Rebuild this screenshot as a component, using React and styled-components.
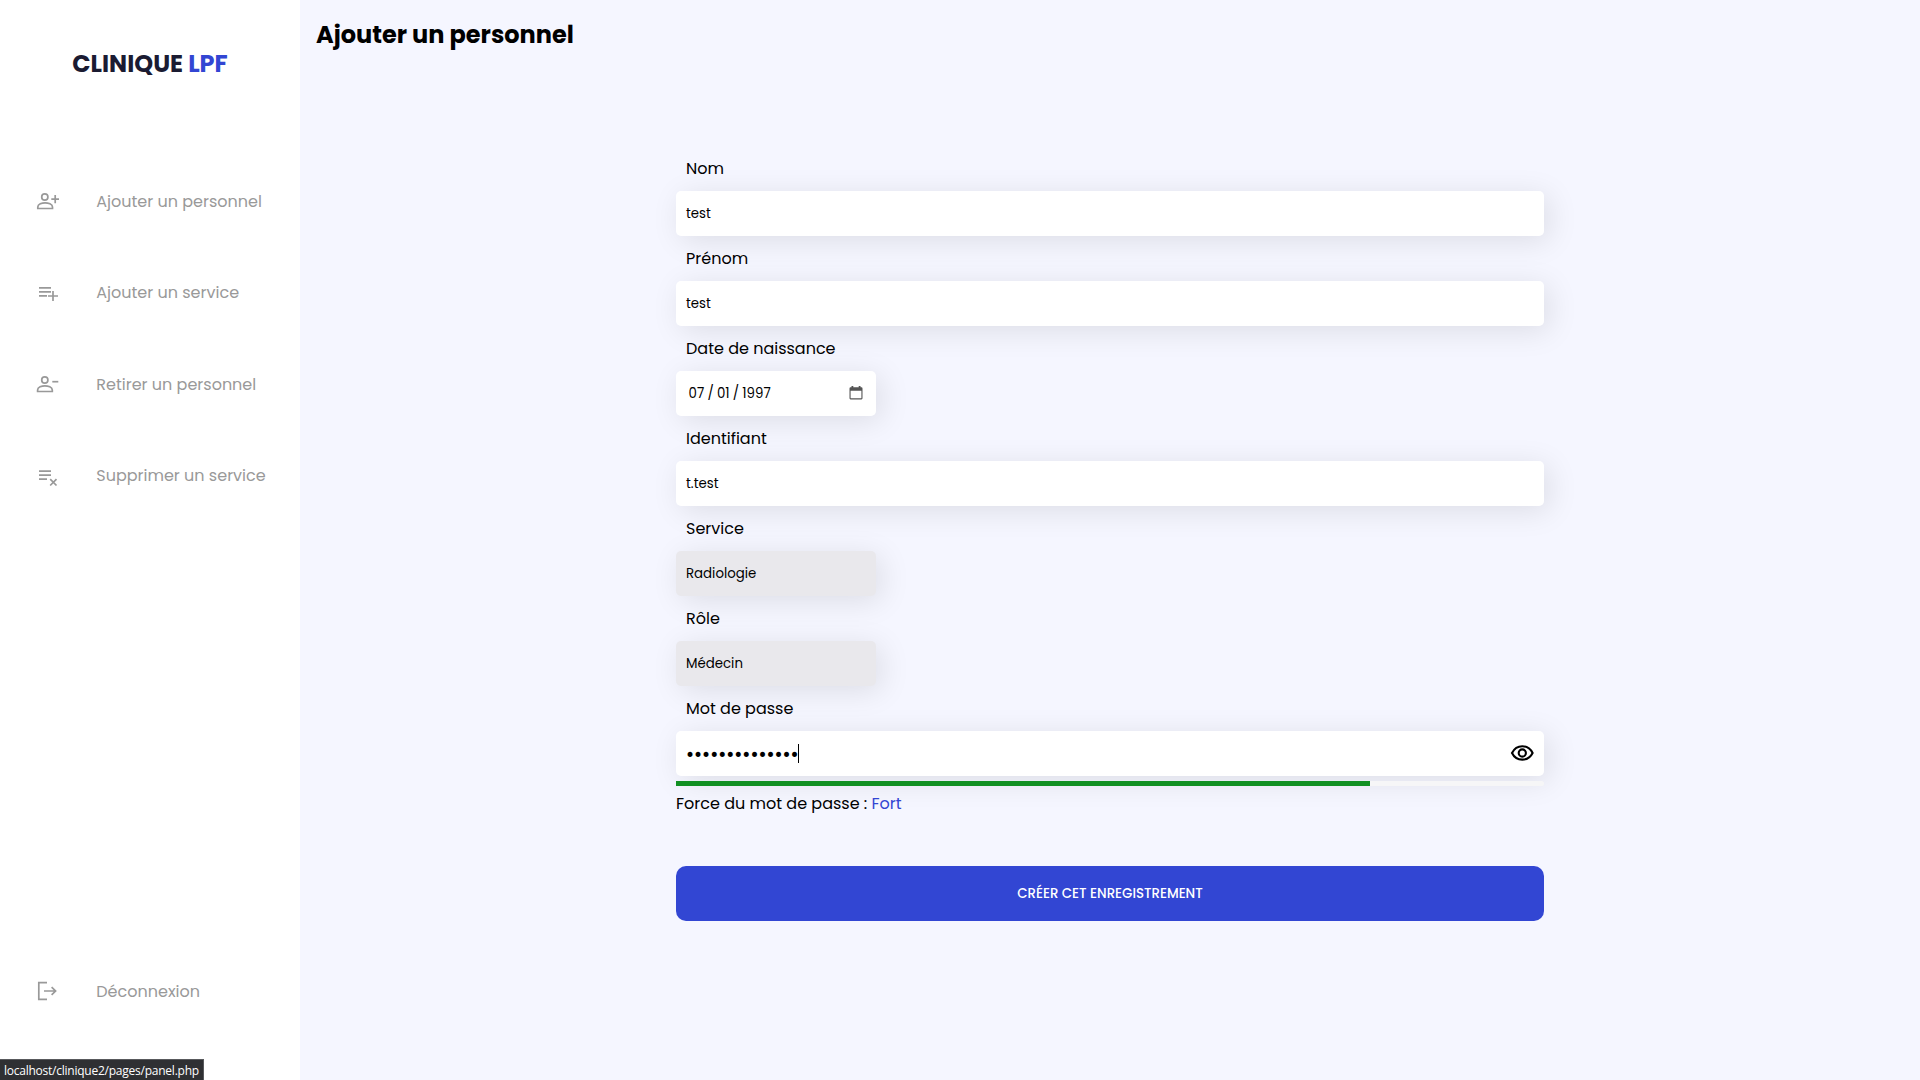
import React from 'react';
import styled, { createGlobalStyle } from 'styled-components';

const GlobalStyle = createGlobalStyle`
  * { box-sizing: border-box; }
  body {
    margin: 0;
    background: #f5f6ff;
    color: #000;
    font-family: Poppins, Inter, "Open Sans", sans-serif;
    font-size: 16px;
  }
`;

const Page = styled.div`
  display: flex;
  height: 1080px;
  overflow: hidden;
`;

const Sidebar = styled.aside`
  display: flex;
  flex-direction: column;
  width: 300px;
  height: 100%;
  padding-bottom: 43px;
  background: #fff;
`;

const Logo = styled.div`
  height: 155.5px;
  padding-top: 46px;
  color: #1b1b32;
  font-size: 24px;
  font-weight: 700;
  line-height: 36px;
  text-align: center;
  white-space: nowrap;
`;

const Text = styled.span`
  white-space: nowrap;
`;

const Accent = styled(Text)`
  color: #3246d3;
`;

const Nav = styled.nav`
  flex: 1;
`;

const NavItem = styled.a`
  display: flex;
  align-items: center;
  gap: 36.3px;
  height: 91.5px;
  padding-left: 36px;
  color: #999;
`;

const Icon = styled.svg`
  flex: none;
  width: 24px;
  height: 24px;
  fill: none;
  stroke: currentColor;
  stroke-width: 1.7;
`;

const Main = styled.main`
  display: flex;
  flex: 1;
  flex-direction: column;
  align-items: center;
`;

const Title = styled.h1`
  align-self: stretch;
  height: 146px;
  margin: 0;
  padding: 17px 0 0 16px;
  font-size: 24px;
  font-weight: 700;
  line-height: 36px;
`;

const Form = styled.form`
  width: 868px;
`;

const Label = styled.label`
  display: block;
  height: 45px;
  padding-left: 10px;
  line-height: 45px;
`;

const Field = styled.div`
  display: flex;
  align-items: center;
  width: ${({ $short }) => ($short ? '200px' : '100%')};
  height: 45px;
  padding: 0 10px;
  border-radius: 5px;
  background: ${({ $disabled }) => ($disabled ? '#e9e8ec' : '#fff')};
  box-shadow: 5px 5px 30px rgba(0, 0, 0, 0.1);
  font-size: 13.333px;
`;

const DateValue = styled.div`
  display: flex;
  flex: 1;
  gap: 3.2px;
  padding-left: 2.6px;
`;

const CalendarIcon = styled.svg`
  width: 14px;
  height: 14px;
  margin: 0 3.5px 1px 0;
  color: #555;
`;

const Bullets = styled(Text)`
  margin-left: -1px;
  padding-top: 3px;
  font-family: "DejaVu Sans", sans-serif;
  font-size: 17px;
  letter-spacing: -1.98px;
`;

const Caret = styled.span`
  width: 1px;
  height: 19px;
  background: #000;
`;

const EyeIcon = styled(Icon)`
  width: 24px;
  height: 18px;
  margin: 0 0 2px auto;
  stroke-width: 2.1;
`;

const Track = styled.div`
  height: 5px;
  margin-top: 5px;
  overflow: hidden;
  border-radius: 0 3px 3px 0;
  background: #f6f6f7;
`;

const Bar = styled.div`
  width: 80%;
  height: 100%;
  background: #119022;
`;

const Strength = styled.p`
  height: 80px;
  margin: 0;
  line-height: 35px;
`;

const Submit = styled.button`
  width: 100%;
  height: 55px;
  padding: 0;
  border: 0;
  border-radius: 10px;
  background: #3246d3;
  color: #fff;
  font: 500 13.333px Poppins, Inter, "Open Sans", sans-serif;
  text-transform: uppercase;
`;

const StatusBar = styled.div`
  position: fixed;
  bottom: 0;
  left: 0;
  width: 204px;
  height: 21px;
  padding-left: 4px;
  overflow: hidden;
  border-top: 1px solid #58595c;
  border-right: 1px solid #58595c;
  background: #2f3033;
  color: #fff;
  font: 12px/22px "Open Sans", "Noto Sans", sans-serif;
  letter-spacing: -0.24px;
`;

const icons = {
  userAdd: (
    <>
      <circle cx="8.8" cy="8" r="3.1" />
      <path d="M1.8 19.5v-1.6c0-2.7 4.2-4.1 7.3-4.1s7.4 1.4 7.4 4.1v1.6z" />
      <path d="M15.3 10.1H23M19.2 6v8.2" />
    </>
  ),
  userRemove: (
    <>
      <circle cx="8.8" cy="8" r="3.1" />
      <path d="M1.6 19.5v-1.6c0-2.7 4.2-4.1 7.3-4.1s7.4 1.4 7.4 4.1v1.6z" />
      <path d="M16.3 9.7h6" />
    </>
  ),
  listAdd: <path d="M3 6.8h12M3 10.8h12M3 14.8h8M12 15h10M17 10v10" />,
  listRemove: <path d="M3 7.2h12M3 11.2h12M3 15.2h8M14.2 15.2l6.3 6.3M20.5 15.2l-6.3 6.3" />,
  logout: <path d="M11 3.7H2.8v16.6H11M8 12h11.6M15.6 8.2l4 3.8-4 3.8" />,
};

const links = [
  ['userAdd', 'Ajouter un personnel'],
  ['listAdd', 'Ajouter un service'],
  ['userRemove', 'Retirer un personnel'],
  ['listRemove', 'Supprimer un service'],
];

function NavLink({ icon, children }) {
  return (
    <NavItem>
      <Icon viewBox="0 0 24 24">{icons[icon]}</Icon>
      <Text>{children}</Text>
    </NavItem>
  );
}

function Row({ label, children, ...field }) {
  return (
    <>
      <Label>{label}</Label>
      <Field {...field}>{children}</Field>
    </>
  );
}

export default function App() {
  return (
    <>
      <GlobalStyle />
      <Page>
        <Sidebar>
          <Logo>
            CLINIQUE <Accent>LPF</Accent>
          </Logo>
          <Nav>
            {links.map(([icon, text]) => (
              <NavLink key={text} icon={icon}>{text}</NavLink>
            ))}
          </Nav>
          <NavLink icon="logout">Déconnexion</NavLink>
        </Sidebar>
        <Main>
          <Title>Ajouter un personnel</Title>
          <Form>
            <Row label="Nom"><Text>test</Text></Row>
            <Row label="Prénom"><Text>test</Text></Row>
            <Row label="Date de naissance" $short>
              <DateValue>
                <Text>07</Text>
                <Text>/</Text>
                <Text>01</Text>
                <Text>/</Text>
                <Text>1997</Text>
              </DateValue>
              <CalendarIcon viewBox="0 0 14 14">
                <path
                  fill="currentColor"
                  fillRule="evenodd"
                  d="M2.5 0h1.8v1.3h5.4V0h1.8v1.3h.9q1.1 0 1.1 1.1v9.9q0 1.1-1.1 1.1H1.6Q.5 13.4.5 12.3V2.4Q.5 1.3 1.6 1.3h.9zM1.6 4.7v7.6h10.8V4.7z"
                />
              </CalendarIcon>
            </Row>
            <Row label="Identifiant"><Text>t.test</Text></Row>
            <Row label="Service" $short $disabled><Text>Radiologie</Text></Row>
            <Row label="Rôle" $short $disabled><Text>Médecin</Text></Row>
            <Row label="Mot de passe">
              <Bullets>••••••••••••••</Bullets>
              <Caret />
              <EyeIcon viewBox="0 0 24 18">
                <path d="M2 9C4.300 4.300 7.700 2.200 12.300 2.200S20.300 4.300 22.600 9C20.300 13.700 16.900 15.600 12.300 15.600S4.300 13.700 2 9z" />
                <circle cx="12.3" cy="9" r="3.6" />
              </EyeIcon>
            </Row>
            <Track><Bar /></Track>
            <Strength>
              Force du mot de passe : <Accent>Fort</Accent>
            </Strength>
            <Submit type="button">Créer cet enregistrement</Submit>
          </Form>
        </Main>
      </Page>
      <StatusBar>localhost/clinique2/pages/panel.php</StatusBar>
    </>
  );
}
